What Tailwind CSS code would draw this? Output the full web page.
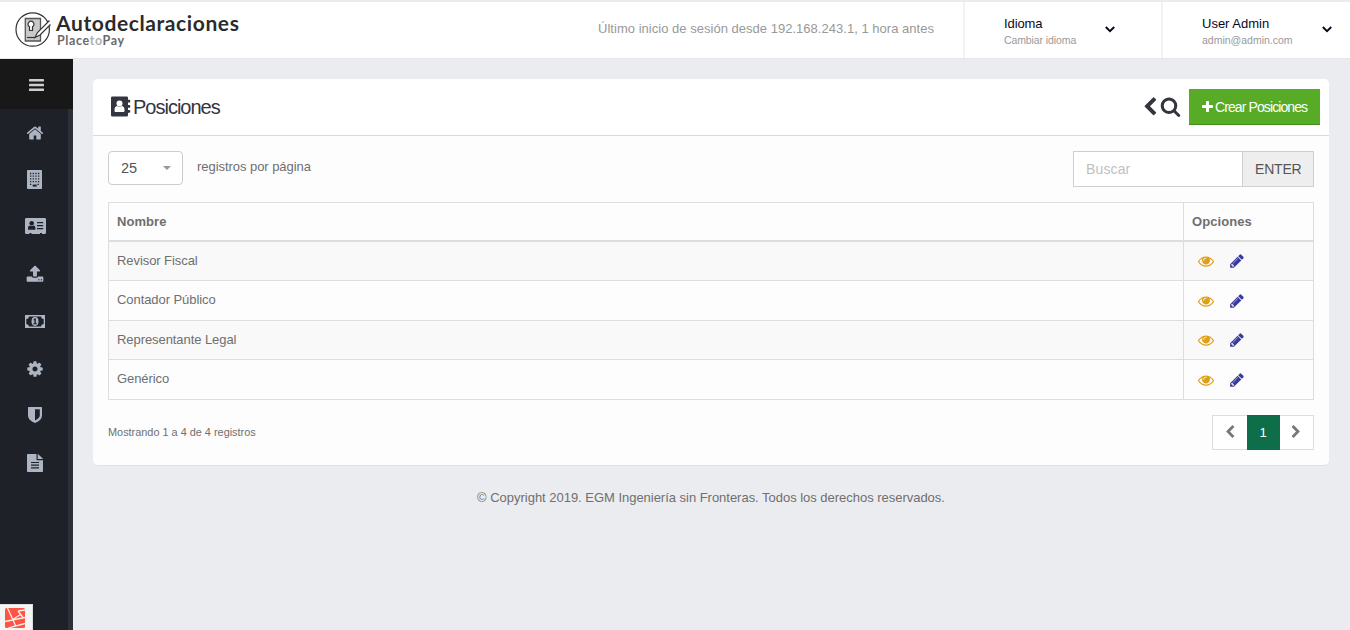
<!DOCTYPE html>
<html lang="es">
<head>
<meta charset="utf-8">
<title>Posiciones</title>
<script src="https://cdn.jsdelivr.net/npm/@tailwindcss/browser@4"></script>
</head>
<body class="flex h-[630px] flex-col overflow-hidden bg-[#ebecf0] font-['Liberation_Sans',sans-serif] text-[13px] leading-5 text-[#6f6f6f]">
<svg class="hidden">
  <symbol id="eye" viewBox="0 0 1792 1792"><path d="M1664 960q-152-236-381-353 61 104 61 225 0 185-131.5 316.5t-316.5 131.5-316.5-131.5-131.5-316.5q0-121 61-225-229 117-381 353 133 205 333.5 326.5t434.5 121.5 434.5-121.5 333.5-326.5zm-720-384q0-20-14-34t-34-14q-125 0-214.5 89.5t-89.5 214.5q0 20 14 34t34 14 34-14 14-34q0-86 61-147t147-61q20 0 34-14t14-34zm848 384q0 34-20 69-140 230-376.5 368.5t-499.5 138.5-499.5-139-376.5-368q-20-35-20-69t20-69q140-229 376.5-368t499.5-139 499.5 139 376.5 368q20 35 20 69z"/></symbol>
  <symbol id="pencil" viewBox="0 0 1792 1792"><path d="M491 1536l91-91-235-235-91 91v107h128v128h107zm523-928q0-22-22-22-10 0-17 7l-542 542q-7 7-7 17 0 22 22 22 10 0 17-7l542-542q7-7 7-17zm-54-192l416 416-832 832h-416v-416zm683 96q0 53-37 90l-166 166-416-416 166-165q36-38 90-38 53 0 91 38l235 234q37 39 37 91z"/></symbol>
  <symbol id="left" viewBox="0 0 1792 1792"><path d="M1427 301l-531 531 531 531q19 19 19 45t-19 45l-166 166q-19 19-45 19t-45-19l-742-742q-19-19-19-45t19-45l742-742q19-19 45-19t45 19l166 166q19 19 19 45t-19 45z"/></symbol>
  <symbol id="right" viewBox="0 0 1792 1792"><path d="M1363 877l-742 742q-19 19-45 19t-45-19l-166-166q-19-19-19-45t19-45l531-531-531-531q-19-19-19-45t19-45l166-166q19-19 45-19t45 19l742 742q19 19 19 45t-19 45z"/></symbol>
</svg>

<header class="flex h-[59px] shrink-0 border-t-2 border-b border-t-[#ebebeb] border-b-[#e6e7ea] bg-white">
  <div class="flex items-start pt-[9px] pl-[15px]">
    <svg class="mt-px size-[36px]" viewBox="0 0 36 36" fill="none" stroke="#333" stroke-width="1.2">
      <circle cx="17.7" cy="17.5" r="16.7" fill="#fff"/>
      <path d="M10.300 6.500H25.500V29H10.300z" fill="#c9c9c9" stroke="#555" stroke-width="1.300"/>
      <path d="M14.500 14.800v3.700h3v-3.700a3 3 0 1 0-3 0z" fill="#fff"/>
      <path d="M12 25.500h8" />
      <path d="M34.500 8.500L22.500 20.500l-2.500 5 5-2.500L35.500 12.500" fill="#fff"/>
    </svg>
    <div class="ml-[5px] font-['Lato',sans-serif] font-bold">
      <div class="text-[21px] leading-[24px] tracking-[0.6px] text-[#2b2b2b]">Autodeclaraciones</div>
      <div class="-mt-px ml-px text-[12.500px] leading-[13px] tracking-[0.600px] text-[#6a6a6a]">Place<span class="text-[#b0b0b0]">to</span>Pay</div>
    </div>
  </div>
  <div class="ml-auto flex">
    <div class="pt-[17px] pr-[29px] tracking-[0.024px] text-[#999]">Último inicio de sesión desde 192.168.243.1, 1 hora antes</div>
    <div class="flex w-[198px] border-l-2 border-[#f3f3f4] pt-[14px] pl-[39px]">
      <div class="w-[101px]">
        <div class="leading-[16px] tracking-[-0.1px] text-[#08081c]">Idioma</div>
        <div class="text-[10.5px] leading-[16px] tracking-[-0.1px] text-[#999]">Cambiar idioma</div>
      </div>
      <svg class="mt-[10px] h-[7px] w-[10px]" viewBox="0 0 10 7" fill="none" stroke="#08081c" stroke-width="1.900"><path d="M.8 1L5 5.200 9.200 1"/></svg>
    </div>
    <div class="flex w-[189px] border-l-2 border-[#f3f3f4] pt-[14px] pl-[39px]">
      <div class="w-[120px]">
        <div class="leading-[16px] text-[#08081c]">User Admin</div>
        <div class="text-[10.5px] leading-[16px] text-[#999]">admin@admin.com</div>
      </div>
      <svg class="mt-[10px] h-[7px] w-[10px]" viewBox="0 0 10 7" fill="none" stroke="#08081c" stroke-width="1.900"><path d="M.8 1L5 5.200 9.200 1"/></svg>
    </div>
  </div>
</header>

<div class="flex min-h-0 flex-1">
  <aside class="relative flex w-[73px] shrink-0 flex-col bg-[#1e2128] text-[#aeb5c2]">
    <div class="z-10 flex h-[50px] shrink-0 items-center justify-center bg-[#181818] pt-[2px]">
      <svg class="h-[12px] w-[15px]" viewBox="0 0 15 12" fill="#cfcfcf"><rect width="15" height="2.500" rx=".4"/><rect y="4.750" width="15" height="2.500" rx=".4"/><rect y="9.500" width="15" height="2.500" rx=".4"/></svg>
    </div>
    <nav class="flex flex-1 flex-col border-r-[5px] border-[#2e3039] pl-px">
      <span class="flex h-[47.200px] items-center justify-center"><svg class="size-[18px]" viewBox="0 0 1792 1792" fill="currentColor"><path d="M1472 992v480q0 26-19 45t-45 19h-384v-384h-256v384h-384q-26 0-45-19t-19-45v-480q0-1 .5-3t.5-3l575-474 575 474q1 2 1 6zm223-69l-62 74q-8 9-21 11h-3q-13 0-21-7l-692-577-692 577q-12 8-24 7-13-2-21-11l-62-74q-8-10-7-23.500t11-21.500l719-599q32-26 76-26t76 26l244 204v-195q0-14 9-23t23-9h192q14 0 23 9t9 23v408l219 182q10 8 11 21.500t-7 23.500z"/></svg></span>
      <span class="flex h-[47.200px] items-center justify-center"><svg class="h-[19px] w-[15px]" viewBox="0 0 15 19" fill="currentColor"><rect width="15" height="19" rx=".8"/><path d="M3 3.500h9.500M3 6.200h9.500M3 8.900h9.500M3 11.600h9.500M3 14.300h2M10.500 14.300h2" stroke="#1e2128" stroke-width="1.300" stroke-dasharray="1.300 1.350"/><path d="M5.700 14.600h4v2h-4z" fill="#1e2128"/></svg></span>
      <span class="flex h-[47.200px] items-center justify-center pb-px pl-px"><svg class="h-[16px] w-[21px]" viewBox="0 0 21 16"><path d="M1.300 0h18.400Q21 0 21 1.300v13.400q0 1.300-1.300 1.300H17v-1h-2v1H6.500v-1h-2v1H1.300Q0 16 0 14.700V1.300Q0 0 1.300 0z" fill="currentColor"/><g fill="#1e2128"><circle cx="6.700" cy="5.200" r="2.300"/><path d="M3 11.800V10q0-2.600 1.800-2.600 1.900 1.100 3.800 0 1.800 0 1.800 2.600v1.800zM12 4.100h6.200v1.200H12zM12 7h6.200v1.200H12zM12 10h6.200v1.200H12z"/></g></svg></span>
      <span class="flex h-[47.200px] items-center justify-center"><svg class="size-[18px]" viewBox="0 0 1792 1792" fill="currentColor"><path d="M1344 1472q0-26-19-45t-45-19-45 19-19 45 19 45 45 19 45-19 19-45zm256 0q0-26-19-45t-45-19-45 19-19 45 19 45 45 19 45-19 19-45zm128-224v320q0 40-28 68t-68 28h-1472q-40 0-68-28t-28-68v-320q0-40 28-68t68-28h427q21 56 70.500 92t110.500 36h256q61 0 110.500-36t70.500-92h427q40 0 68 28t28 68zm-325-648q-17 40-59 40h-256v448q0 26-19 45t-45 19h-256q-26 0-45-19t-19-45v-448h-256q-42 0-59-40-17-39 14-69l448-448q18-19 45-19t45 19l448 448q31 30 14 69z"/></svg></span>
      <span class="flex h-[47.200px] items-center justify-center"><svg class="h-[13px] w-[20px]" viewBox="0 0 20 13"><path fill="currentColor" fill-rule="evenodd" d="M0 0h20v13H0zM4 1.400A2.800 2.800 0 0 1 1.300 4v5A2.800 2.800 0 0 1 4 11.600h12A2.800 2.800 0 0 1 18.700 9V4A2.800 2.800 0 0 1 16 1.400z"/><ellipse cx="10" cy="6.500" rx="3.500" ry="4.400" fill="currentColor"/><path d="M8.200 4.900l1.600-1.700h1v5h1v1H8.300v-1h1.100V5l-.6.600z" fill="#1e2128"/></svg></span>
      <span class="flex h-[47.200px] items-center justify-center"><svg class="size-[18px]" viewBox="0 0 1792 1792" fill="currentColor"><path d="M1152 896q0-106-75-181t-181-75-181 75-75 181 75 181 181 75 181-75 75-181zm512-109v222q0 12-8 23t-20 13l-185 28q-19 54-39 91 35 50 107 138 10 12 10 25t-9 23q-27 37-99 108t-94 71q-12 0-26-9l-138-108q-44 23-91 38-16 136-29 186-7 28-36 28h-222q-14 0-24.500-8.500t-11.500-21.500l-28-184q-49-16-90-37l-141 107q-10 9-25 9-14 0-25-11-126-114-165-168-7-10-7-23 0-12 8-23 15-21 51-66.500t54-70.500q-27-50-41-99l-183-27q-13-2-21-12.500t-8-23.500v-222q0-12 8-23t19-13l186-28q14-46 39-92-40-57-107-138-10-12-10-24 0-10 9-23 26-36 98.500-107.500t94.500-71.500q13 0 26 10l138 107q44-23 91-38 16-136 29-186 7-28 36-28h222q14 0 24.500 8.500t11.500 21.500l28 184q49 16 90 37l142-107q9-9 24-9 13 0 25 10 129 119 165 170 7 8 7 22 0 12-8 23-15 21-51 66.500t-54 70.500q26 50 41 98l183 28q13 2 21 12.500t8 23.500z"/></svg></span>
      <span class="flex h-[47.200px] items-center justify-center pb-px"><svg class="h-[16px] w-[14px]" viewBox="0 0 14 16"><path fill="currentColor" fill-rule="evenodd" d="M.6 0h12.800q.6 0 .6.600V8.500q0 4.500-7 7.500-7-3-7-7.500V.6Q0 0 .6 0zM7 2.300v11.200q4.800-2.500 4.800-5V2.300z"/></svg></span>
      <span class="flex h-[47.200px] items-center justify-center"><svg class="h-[18px] w-[16px]" viewBox="0 0 16 18"><path fill="currentColor" d="M.8 0H9.500V5.300q0 .9.900.9H16V17.200q0 .8-.8.800H.8Q0 18 0 17.200V.8Q0 0 .8 0zM10.700 0q.5.100.8.400l4 3.900q.3.300.4.700h-5.200z"/><path d="M4 8.500h8M4 11.200h8M4 13.900h8" stroke="#1e2128" stroke-width="1.200"/></svg></span>
    </nav>
    <div class="absolute bottom-0 left-0 h-[26px] w-[33px] border-t border-r border-[#ddd] bg-[#f5f5f5] pt-[3px] pl-[5px]">
      <svg class="h-[20px] w-[20px]" viewBox="0 0 20 20"><rect width="20" height="20" rx="1.500" fill="#ff5443"/><path d="M2.500 0L10.500 17.500M0 13.500L20 9.500M3.500 20L20 15.500M7 12L15.500 6.500M13 3l7-1M13 3l5 6.500" stroke="#f9ebe8" stroke-width="1.300" fill="none"/></svg>
    </div>
  </aside>

  <main class="flex-1 pt-5 pr-[21px] pl-5">
    <section class="h-[387px] rounded-[5px] border-b border-[#dfe0e2] bg-[#fdfdfd]">
      <div class="flex h-[57px] items-center rounded-t-[5px] border-b border-[#d7dbe1] bg-white pr-[9px] pl-[18px] text-[#33353f]">
        <svg class="mb-px h-[21px] w-[20px]" viewBox="0 0 20 21"><path fill="#33353f" d="M1.300.5h14.400q1.300 0 1.300 1.300v2h1.500q.7 0 .7.600v1.500q0 .7-.7.700H17v2.300h1.500q.7 0 .7.600V11q0 .7-.7.700H17v2.300h1.500q.7 0 .7.600v1.500q0 .7-.7.700H17v2.400q0 1.300-1.300 1.300H1.300Q0 20.500 0 19.200V1.800Q0 .5 1.300.5z"/><circle cx="8.500" cy="7.500" r="3" fill="#fff"/><path fill="#fff" d="M3.500 15v-1q0-3.500 2.500-4 2.500 1.600 5 0 2.500.5 2.500 4v1q0 1-1 1h-8q-1 0-1-1z"/></svg>
        <h1 class="ml-[2px] text-[20px] tracking-[-1px]">Posiciones</h1>
        <svg class="mb-px ml-auto size-[20px]" fill="currentColor"><use href="#left"/></svg>
        <svg class="mr-[8px] mb-px size-[21px]" viewBox="0 0 1792 1792" fill="currentColor"><path d="M1216 832q0-185-131.500-316.500t-316.500-131.500-316.500 131.500-131.500 316.500 131.500 316.500 316.500 131.500 316.500-131.500 131.500-316.500zm512 832q0 52-38 90t-90 38q-54 0-90-38l-343-342q-179 124-399 124-143 0-273.500-55.500t-225-150-150-225-55.500-273.500 55.500-273.500 150-225 225-150 273.500-55.500 273.500 55.500 225 150 150 225 55.500 273.500q0 220-124 399l343 343q37 37 37 90z"/></svg>
        <button class="flex h-[36px] w-[131px] items-center border-b border-[#3f8a18] bg-[#57ab27] pl-[13px] text-[14px] tracking-[-0.900px] whitespace-nowrap text-white">
          <svg class="mr-[2px] size-[11px] shrink-0" viewBox="192 128 1408 1408" fill="currentColor"><path d="M1600 736v192q0 40-28 68t-68 28h-416v416q0 40-28 68t-68 28h-192q-40 0-68-28t-28-68v-416h-416q-40 0-68-28t-28-68v-192q0-40 28-68t68-28h416v-416q0-40 28-68t68-28h192q40 0 68 28t28 68v416h416q40 0 68 28t28 68z"/></svg>Crear Posiciones</button>
      </div>
      <div class="px-[15px] pt-[15px]">
        <div class="flex h-[51px] items-start">
          <div class="flex h-[34px] w-[75px] items-center justify-between rounded-[4px] border border-[#ccc] bg-white pr-[11px] pl-[12px] text-[14.500px] text-[#555]">25
            <svg class="h-1 w-2" viewBox="0 0 8 4" fill="#999"><path d="M0 0h8L4 4z"/></svg></div>
          <span class="mt-[6px] ml-[14px] tracking-[-0.050px]">registros por página</span>
          <div class="ml-auto flex h-[36px] w-[241px] border border-[#ccd0d2] bg-white text-[14px]">
            <span class="flex-1 pt-[7px] pl-[12px] tracking-[0.14px] text-[#bfbfbf]">Buscar</span>
            <span class="w-[71px] border-l border-[#ccd0d2] bg-[#eee] pt-[7px] pl-[12px] tracking-[-0.200px] text-[#555]">ENTER</span>
          </div>
        </div>
        <table class="w-full table-fixed border-collapse border border-[#ddd] text-left tracking-[-0.070px]">
          <colgroup><col><col class="w-[130px]"></colgroup>
          <thead><tr class="h-[38px] border-b-2 border-[#ddd] tracking-[0.070px]"><th class="border-r border-[#ddd] px-2 pt-px">Nombre</th><th class="px-2 pt-px">Opciones</th></tr></thead>
          <tbody>
            <tr class="h-[40px] border-b border-[#ddd] bg-[#f9f9f9]"><td class="border-r border-[#ddd] px-2 pt-px">Revisor Fiscal</td><td class="pl-[14px]"><span class="flex gap-[15px]"><svg class="size-4 fill-[#dfa017]"><use href="#eye"/></svg><svg class="size-4 fill-[#3a3a9c]"><use href="#pencil"/></svg></span></td></tr>
            <tr class="h-[40px] border-b border-[#ddd]"><td class="border-r border-[#ddd] px-2 pb-[2px]">Contador Público</td><td class="pl-[14px]"><span class="flex gap-[15px]"><svg class="size-4 fill-[#dfa017]"><use href="#eye"/></svg><svg class="size-4 fill-[#3a3a9c]"><use href="#pencil"/></svg></span></td></tr>
            <tr class="h-[39px] border-b border-[#ddd] bg-[#f9f9f9]"><td class="border-r border-[#ddd] px-2">Representante Legal</td><td class="pl-[14px]"><span class="flex gap-[15px] pb-px"><svg class="size-4 fill-[#dfa017]"><use href="#eye"/></svg><svg class="size-4 fill-[#3a3a9c]"><use href="#pencil"/></svg></span></td></tr>
            <tr class="h-[40px] border-b border-[#ddd]"><td class="border-r border-[#ddd] px-2 pb-[2px]">Genérico</td><td class="pl-[14px]"><span class="flex gap-[15px]"><svg class="size-4 fill-[#dfa017]"><use href="#eye"/></svg><svg class="size-4 fill-[#3a3a9c]"><use href="#pencil"/></svg></span></td></tr>
          </tbody>
        </table>
        <div class="mt-[15px] flex items-center justify-between">
          <span class="pb-px text-[10.900px]">Mostrando 1 a 4 de 4 registros</span>
          <div class="flex h-[35px] w-[102px] border border-[#ddd] bg-white">
            <span class="flex flex-1 items-center justify-center pb-px"><svg class="size-[14px] fill-[#777]"><use href="#left"/></svg></span>
            <span class="-my-px flex w-[33px] items-center justify-center bg-[#0f6e4a] text-white">1</span>
            <span class="flex flex-1 items-center justify-center pb-px"><svg class="size-[14px] fill-[#777]"><use href="#right"/></svg></span>
          </div>
        </div>
      </div>
    </section>
    <footer class="mt-[22px] text-center tracking-[-0.024px]">© Copyright 2019. EGM Ingeniería sin Fronteras. Todos los derechos reservados.</footer>
  </main>
</div>
</body>
</html>
